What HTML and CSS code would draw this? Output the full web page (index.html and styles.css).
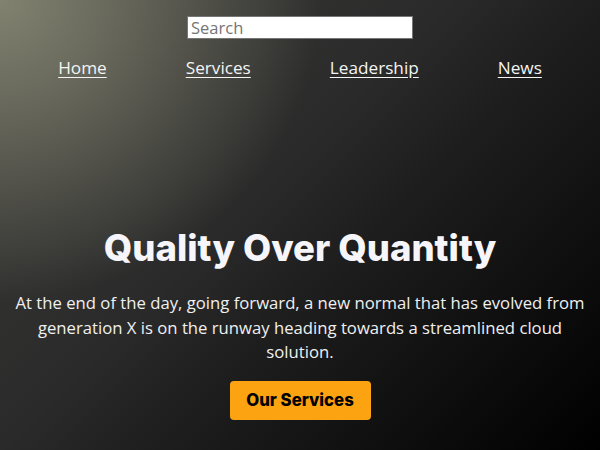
FILE: index.html
```
<!DOCTYPE html>
<html lang="en">
<head>
<meta charset="utf-8">
<title>Quality Over Quantity</title>
<link rel="stylesheet" href="styles.css">
</head>
<body>
<div class="page">
  <header class="header">
    <input class="search" type="text" placeholder="Search">
    <nav class="nav">
      <a href="#">Home</a>
      <a href="#">Services</a>
      <a href="#">Leadership</a>
      <a href="#">News</a>
    </nav>
  </header>
  <section class="hero">
    <h1 class="hero-title">Quality Over Quantity</h1>
    <p class="hero-text">At the end of the day, going forward, a new normal that has evolved from generation X is on the runway heading towards a streamlined cloud solution.</p>
    <a class="hero-btn" href="#">Our Services</a>
  </section>
</div>
</body>
</html>
```
FILE: styles.css
```
html, body {
  margin: 0;
  padding: 0;
}
body {
  width: 600px;
  height: 450px;
  overflow: hidden;
  font-family: "Open Sans", "DejaVu Sans", sans-serif;
  color: #f2f2f2;
  background:
    radial-gradient(ellipse 320px 300px at 0 0, rgba(130,130,112,1) 0%, rgba(130,130,112,0) 100%),
    linear-gradient(135deg, #3c3c3a 0%, #2a2a2a 43%, #1e1e1e 57%, #000 100%);
}
.page {
  height: 450px;
  display: flex;
  flex-direction: column;
}
.header {
  padding-top: 16px;
}
.search {
  display: block;
  margin: 0 auto;
  box-sizing: border-box;
  width: 226px;
  height: 23px;
  padding: 0 3px;
  border: 1px solid #767676;
  background: #fff;
  font-family: "Open Sans", sans-serif;
  font-size: 16.5px;
  color: #333;
  outline: none;
}
.search::placeholder {
  color: #757575;
}
.nav {
  margin-top: 17px;
  display: flex;
  justify-content: center;
  gap: 79px;
  font-size: 17.2px;
  line-height: 24px;
}
.nav a {
  color: #f4f4f4;
  text-decoration: underline;
  text-underline-offset: 3px;
}
.hero {
  margin-top: 146px;
  display: flex;
  flex-direction: column;
  align-items: center;
  text-align: center;
  padding: 0 12px;
}
.hero-title {
  margin: 0;
  font-family: "Inter", "Lato", sans-serif;
  font-weight: 800;
  font-size: 36.5px;
  line-height: 44px;
  color: #f5f5fa;
}
.hero-text {
  margin: 21px 0 0;
  font-size: 16.7px;
  line-height: 24.5px;
  color: #f0f0f0;
}
.hero-btn {
  margin-top: 16px;
  display: inline-flex;
  align-items: center;
  justify-content: center;
  width: 141px;
  height: 39px;
  box-sizing: border-box;
  background: #fca311;
  border-radius: 4px;
  color: #000;
  font-family: "Inter", "Lato", sans-serif;
  font-weight: 800;
  font-size: 16.8px;
  text-decoration: none;
}
```
